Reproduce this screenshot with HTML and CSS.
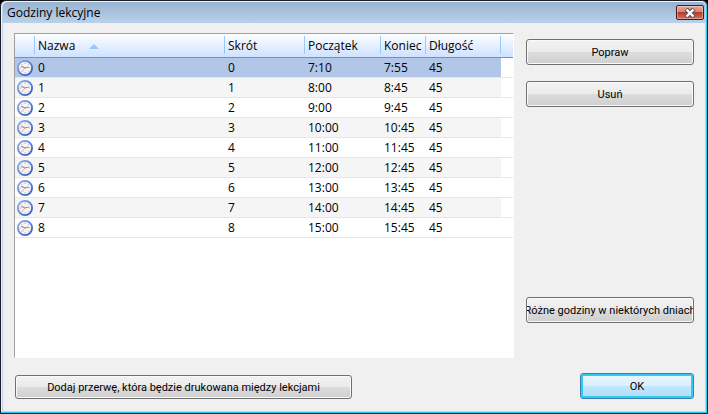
FILE: index.html
```html
<!DOCTYPE html>
<html lang="pl">
<head>
    <meta charset="utf-8">
    <title>Godziny lekcyjne</title>
    <link rel="stylesheet" href="styles.css">
</head>
<body>
    <svg class="defs" aria-hidden="true">
        <linearGradient id="rim" x1="0" y1="0" x2="1" y2="1">
            <stop offset="0" stop-color="#8fb0ea"/>
            <stop offset="0.5" stop-color="#5c82d6"/>
            <stop offset="1" stop-color="#2f55b8"/>
        </linearGradient>
        <symbol id="clock" viewBox="0 0 16 16">
            <circle cx="8" cy="8" r="7.1" fill="#f6f4f5" stroke="url(#rim)" stroke-width="1.8"/>
            <path d="M8 2.4v1.4M8 12.2v1.4M2.4 8h1.4M12.2 8h1.4M4.2 4.2l.7.7M11.8 4.2l-.7.7M11.8 11.8l-.7-.7" stroke="#b4b4c0" stroke-width="1" fill="none"/>
            <path d="M4.2 6.2L8 8l3.8-1" stroke="#8a8892" stroke-width="1.1" fill="none"/>
            <path d="M8 8l-3.4 4.2" stroke="#f0a097" stroke-width="1" fill="none"/>
        </symbol>
    </svg>

    <div class="window">
        <div class="titlebar">
            <h1>Godziny lekcyjne</h1>
            <button class="close" aria-label="Zamknij">
                <svg width="12" height="10" viewBox="0 0 12 10">
                    <path d="M2 1l8 8M10 1l-8 8" stroke="#535666" stroke-width="4.4"/>
                    <path d="M2.5 1.5l7 7M9.5 1.5l-7 7" stroke="#fff" stroke-width="2.4"/>
                </svg>
            </button>
        </div>

        <div class="content">
            <div class="main">
                <div class="list">
                    <table>
                        <colgroup>
                            <col class="c-icon">
                            <col class="c-name">
                            <col class="c-short">
                            <col class="c-start">
                            <col class="c-end">
                            <col class="c-length">
                            <col>
                        </colgroup>
                        <thead>
                            <tr>
                                <th></th>
                                <th>Nazwa<span class="sort"></span></th>
                                <th>Skrót</th>
                                <th>Początek</th>
                                <th>Koniec</th>
                                <th>Długość</th>
                                <th></th>
                            </tr>
                        </thead>
                        <tbody>
                            <tr class="selected"><td><svg class="clock"><use href="#clock"/></svg></td><td>0</td><td>0</td><td>7:10</td><td>7:55</td><td>45</td><td></td></tr>
                            <tr><td><svg class="clock"><use href="#clock"/></svg></td><td>1</td><td>1</td><td>8:00</td><td>8:45</td><td>45</td><td></td></tr>
                            <tr><td><svg class="clock"><use href="#clock"/></svg></td><td>2</td><td>2</td><td>9:00</td><td>9:45</td><td>45</td><td></td></tr>
                            <tr><td><svg class="clock"><use href="#clock"/></svg></td><td>3</td><td>3</td><td>10:00</td><td>10:45</td><td>45</td><td></td></tr>
                            <tr><td><svg class="clock"><use href="#clock"/></svg></td><td>4</td><td>4</td><td>11:00</td><td>11:45</td><td>45</td><td></td></tr>
                            <tr><td><svg class="clock"><use href="#clock"/></svg></td><td>5</td><td>5</td><td>12:00</td><td>12:45</td><td>45</td><td></td></tr>
                            <tr><td><svg class="clock"><use href="#clock"/></svg></td><td>6</td><td>6</td><td>13:00</td><td>13:45</td><td>45</td><td></td></tr>
                            <tr><td><svg class="clock"><use href="#clock"/></svg></td><td>7</td><td>7</td><td>14:00</td><td>14:45</td><td>45</td><td></td></tr>
                            <tr><td><svg class="clock"><use href="#clock"/></svg></td><td>8</td><td>8</td><td>15:00</td><td>15:45</td><td>45</td><td></td></tr>
                        </tbody>
                    </table>
                </div>
                <div class="side">
                    <button class="btn">Popraw</button>
                    <button class="btn">Usuń</button>
                    <button class="btn days">Różne godziny w niektórych dniach</button>
                </div>
            </div>
            <div class="footer">
                <button class="btn add">Dodaj przerwę, która będzie drukowana między lekcjami</button>
                <button class="btn ok">OK</button>
            </div>
        </div>
    </div>
</body>
</html>
```
FILE: styles.css
```css
* {
    box-sizing: border-box;
}

body {
    margin: 0;
    background-color: #000;
    color: #000;
    font-family: "Open Sans", "Noto Sans", sans-serif;
    font-size: 12px;
}

.defs {
    position: absolute;
    width: 0;
    height: 0;
}

.window {
    display: flex;
    flex-direction: column;
    height: 100vh;
    border: 1px solid #1c1c22;
    border-radius: 6px 6px 0 0;
    background-color: #b9d1ea;
    box-shadow: inset -1px -1px #2ccbe8, inset 1px 1px #eef5fb;
    padding: 1px 2px 2px 2px;
}

.titlebar {
    display: flex;
    justify-content: space-between;
    align-items: center;
    height: 21px;
    flex: none;
    padding: 0 1px 0 4px;
    background: linear-gradient(#99b4d1, #b9d1ea);
    border-radius: 5px 5px 0 0;
}

.titlebar h1 {
    margin: 0;
    font-size: 12px;
    font-weight: normal;
    line-height: 20px;
}

.close {
    display: flex;
    align-items: center;
    justify-content: center;
    width: 28px;
    height: 15px;
    padding: 0;
    border: 1px solid #4a1722;
    border-radius: 2px;
    background: linear-gradient(#e8a99c, #d98476 45%, #b93c26 50%, #d4705a);
    box-shadow: inset 0 0 0 1px rgba(255, 255, 255, 0.35);
}

.content {
    flex: 1;
    display: flex;
    flex-direction: column;
    min-height: 0;
    padding: 10px 11px 12px 11px;
    background-color: #f0f0f0;
}

.main {
    flex: 1;
    display: flex;
    gap: 12px;
    min-height: 0;
}

.list {
    flex: 1;
    min-width: 0;
    border: 1px solid #fff;
    border-top-color: #a0a0a0;
    border-left-color: #a0a0a0;
    background-color: #fff;
}

table {
    width: 100%;
    table-layout: fixed;
    border-collapse: separate;
    border-spacing: 0;
}

.c-icon { width: 20px; }
.c-name { width: 190px; }
.c-short { width: 80px; }
.c-start { width: 76px; }
.c-end { width: 45px; }
.c-length { width: 75px; }

thead tr {
    background: linear-gradient(#fdfeff, #cce0ff);
}

th {
    height: 24px;
    padding: 0 0 0 3px;
    border-bottom: 1px solid #5f95d5;
    background: linear-gradient(#99c8ff, #99c8ff) right 2px / 1px 18px no-repeat;
    font-weight: normal;
    text-align: left;
    white-space: nowrap;
}

th:last-child {
    background: none;
}

.sort {
    display: inline-block;
    margin-left: 14px;
    border: 5px solid transparent;
    border-top: 0;
    border-bottom-color: #99c8ff;
    vertical-align: middle;
}

td {
    height: 20px;
    padding: 0 0 0 3px;
    border-bottom: 1px solid #e6e6e6;
    line-height: 19px;
}

td:first-child {
    padding: 0 2px;
}

tbody tr:nth-child(even) td:not(:last-child) {
    background-color: #f5f5f5;
}

tbody .selected td:not(:last-child) {
    background-color: #b2c6e8;
}

.clock {
    display: block;
    width: 16px;
    height: 16px;
}

.side {
    display: flex;
    flex-direction: column;
    gap: 16px;
    width: 168px;
    padding: 6px 0 35px;
}

.btn {
    display: flex;
    align-items: center;
    justify-content: center;
    height: 26px;
    padding: 0;
    border: 1px solid #707070;
    border-radius: 3px;
    background: linear-gradient(#f2f2f2, #ebebeb 50%, #dddddd 50%, #cfcfcf);
    box-shadow: inset 0 0 0 1px #fafafa;
    color: #000;
    font-family: Roboto, Tahoma, sans-serif;
    font-size: 11px;
    white-space: nowrap;
    overflow: hidden;
}

.days {
    margin-top: auto;
}

.footer {
    display: flex;
    justify-content: space-between;
    align-items: flex-end;
    margin-top: 15px;
    padding-left: 1px;
}

.add {
    width: 337px;
    height: 24px;
}

.ok {
    width: 114px;
    border-color: #3c7fb1;
    background: linear-gradient(#eaf6fd, #d9f0fc 50%, #bee6fd 50%, #b5dcf3);
    box-shadow: inset 0 0 0 2px #33c8f5;
}
```
